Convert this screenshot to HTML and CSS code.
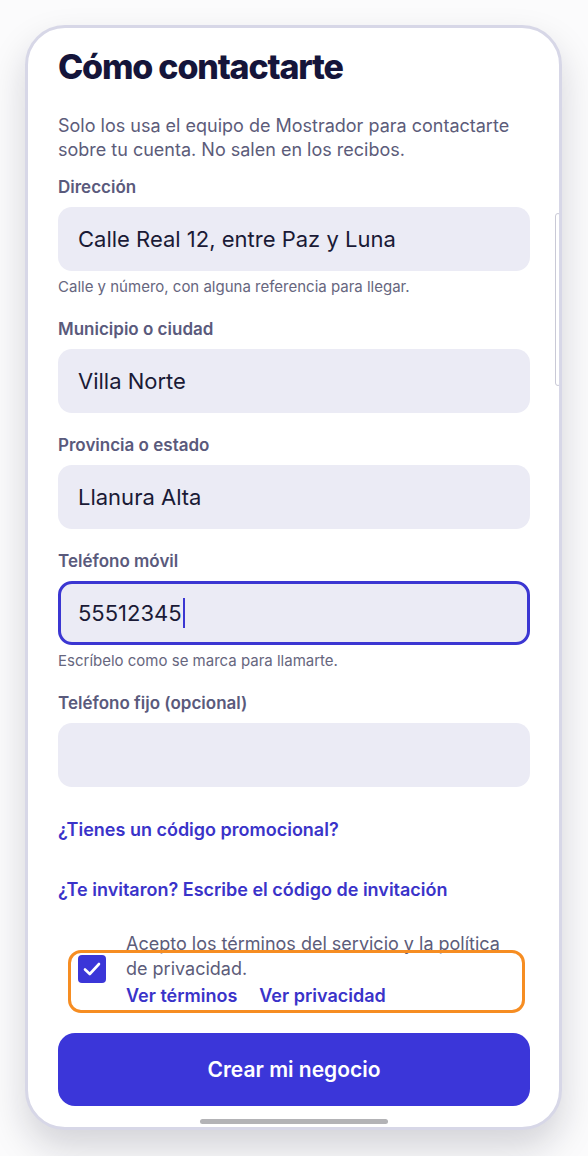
FILE: index.html
```html
<!DOCTYPE html>
<html lang="es">
<head>
    <meta charset="UTF-8">
    <meta name="viewport" content="width=device-width, initial-scale=1.0">
    <title>Cómo contactarte</title>
    <link rel="stylesheet" href="styles.css">
</head>
<body>
    <div class="phone">
        <div class="screen">
            <h1 class="title">Cómo contactarte</h1>
            <p class="intro">Solo los usa el equipo de Mostrador para contactarte sobre tu cuenta. No salen en los recibos.</p>

            <div class="field">
                <label class="field-label">Dirección</label>
                <div class="input">Calle Real 12, entre Paz y Luna</div>
                <div class="field-help">Calle y número, con alguna referencia para llegar.</div>
            </div>

            <div class="field">
                <label class="field-label">Municipio o ciudad</label>
                <div class="input">Villa Norte</div>
            </div>

            <div class="field">
                <label class="field-label">Provincia o estado</label>
                <div class="input">Llanura Alta</div>
            </div>

            <div class="field">
                <label class="field-label">Teléfono móvil</label>
                <div class="input input-focus">55512345<span class="caret"></span></div>
                <div class="field-help">Escríbelo como se marca para llamarte.</div>
            </div>

            <div class="field">
                <label class="field-label">Teléfono fijo (opcional)</label>
                <div class="input"></div>
            </div>

            <div class="links">
                <a href="#" class="link">¿Tienes un código promocional?</a>
                <a href="#" class="link">¿Te invitaron? Escribe el código de invitación</a>
            </div>

            <div class="consent">
                <div class="checkbox">
                    <svg width="18" height="14" viewBox="0 0 18 14">
                        <path d="M2 7.5 L6.8 12 L16 2" fill="none" stroke="#fff" stroke-width="2.6" stroke-linecap="round" stroke-linejoin="round"/>
                    </svg>
                </div>
                <div class="consent-text">
                    Acepto los términos del servicio y la política de privacidad.
                    <div class="consent-links">
                        <a href="#" class="link">Ver términos</a>
                        <a href="#" class="link">Ver privacidad</a>
                    </div>
                </div>
            </div>

            <button class="btn-primary">Crear mi negocio</button>

            <div class="scrollbar"></div>
            <div class="home-bar"></div>
        </div>
    </div>
</body>
</html>
```

FILE: styles.css
```css
* {
    margin: 0;
    padding: 0;
    box-sizing: border-box;
}

body {
    font-family: 'Inter', 'Noto Sans', sans-serif;
    background: #fbfbfc;
    padding: 25px 26px 26px 25px;
}

.phone {
    width: 537px;
    height: 1105px;
    border: 3px solid #d7d7e7;
    border-radius: 40px;
    background: #fff;
    box-shadow: 0 18px 36px rgba(20, 20, 40, 0.17);
    overflow: hidden;
}

.screen {
    position: relative;
    height: 100%;
    padding: 19px 29px 0 30px;
    display: flex;
    flex-direction: column;
}

.title {
    font-size: 34px;
    font-weight: 800;
    letter-spacing: -1.2px;
    color: #15153a;
    line-height: 40px;
}

.intro {
    margin-top: 27px;
    font-size: 18px;
    line-height: 24px;
    color: #5c5c7a;
}

.field {
    margin-top: 14px;
    display: flex;
    flex-direction: column;
}

.field + .field {
    margin-top: 21px;
}

.field-label {
    font-size: 17px;
    line-height: 22px;
    font-weight: 600;
    color: #5a5a7c;
}

.input {
    margin-top: 9px;
    height: 64px;
    border-radius: 14px;
    background: #ebebf5;
    padding: 0 20px;
    display: flex;
    align-items: center;
    font-size: 22px;
    color: #1a1a36;
}

.input-focus {
    border: 3px solid #3b36d2;
    padding-left: 17px;
}

.caret {
    display: inline-block;
    width: 2px;
    height: 30px;
    background: #3b36d2;
    margin-left: 1px;
}

.field-help {
    margin-top: 6px;
    font-size: 15px;
    line-height: 20px;
    color: #66667e;
}

.links {
    display: flex;
    flex-direction: column;
    gap: 38px;
    margin-top: 32px;
}

.link {
    font-size: 18px;
    line-height: 22px;
    font-weight: 600;
    color: #3a33c9;
    text-decoration: none;
}

.consent {
    position: relative;
    margin-top: 30px;
    display: flex;
    align-items: center;
    gap: 20px;
    padding-left: 20px;
}

.consent::after {
    content: '';
    position: absolute;
    top: 19px;
    bottom: -6px;
    left: 10px;
    right: 5px;
    border: 3px solid #f68d22;
    border-radius: 13px;
}

.checkbox {
    width: 28px;
    height: 28px;
    border-radius: 4px;
    background: #3b36d8;
    display: flex;
    align-items: center;
    justify-content: center;
    flex-shrink: 0;
}

.consent-text {
    font-size: 18px;
    line-height: 25px;
    color: #5c5c7a;
    padding-right: 10px;
}

.consent-links {
    display: flex;
    gap: 22px;
    margin-top: 4px;
}

.consent-links .link {
    font-size: 18px;
}

.btn-primary {
    margin-top: 26px;
    height: 73px;
    border: none;
    border-radius: 17px;
    background: #3b36d9;
    color: #fff;
    font-family: inherit;
    font-size: 21px;
    font-weight: 600;
}

.scrollbar {
    position: absolute;
    right: -2px;
    top: 185px;
    width: 6px;
    height: 173px;
    border: 1px solid #c9c9d6;
    border-radius: 4px;
}

.home-bar {
    position: absolute;
    left: 172px;
    bottom: 3px;
    width: 188px;
    height: 5px;
    border-radius: 3px;
    background: #b3b3b6;
}
```
